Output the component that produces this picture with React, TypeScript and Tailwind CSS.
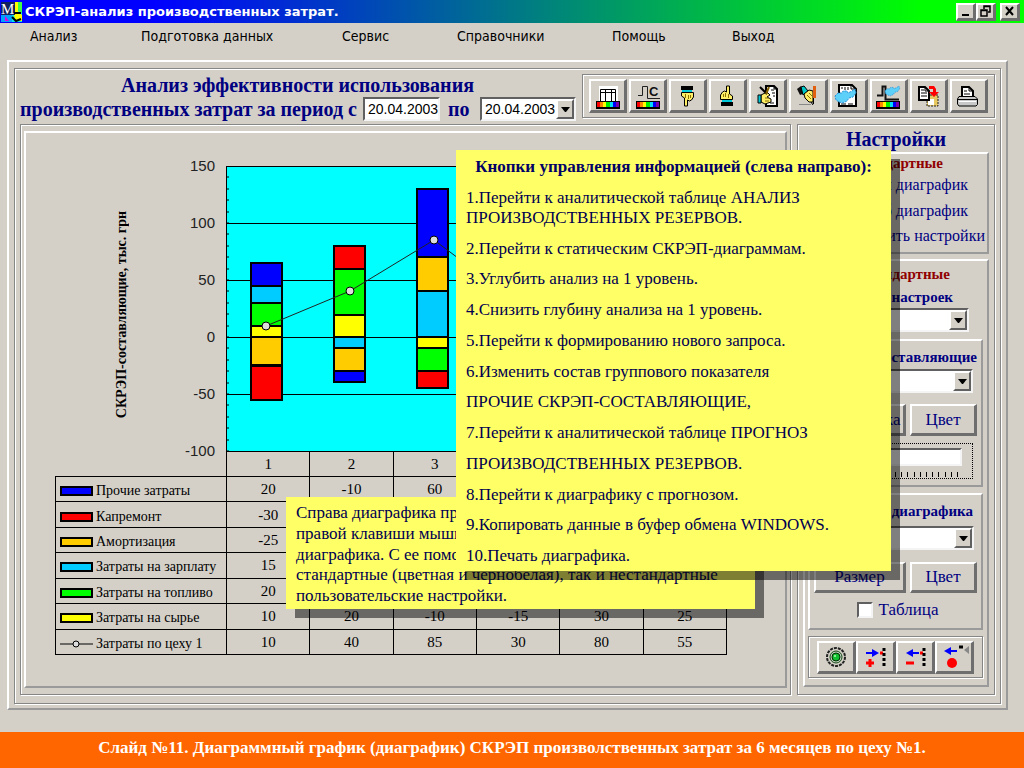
import React, { useState } from 'react';

const SERIES = [
   { name: 'Прочие затраты', color: '#0000ff', values: [20, -10, 60] },
   { name: 'Капремонт', color: '#ff0000', values: [-30, 20, -15] },
   { name: 'Амортизация', color: '#ffcc00', values: [-25, -20, 30] },
   { name: 'Затраты на зарплату', color: '#00ccff', values: [15, -10, 40] },
   { name: 'Затраты на топливо', color: '#00ff00', values: [20, 40, -20] },
   { name: 'Затраты на сырье', color: '#ffff00', values: [10, 20, -10, -15, 30, 25] },
];
const TOTALS = [10, 40, 85, 30, 80, 55];
const AXIS = [150, 100, 50, 0, -50, -100];

const MENU = [
   { label: 'Анализ', width: 'w-[111px]' },
   { label: 'Подготовка данных', width: 'w-[201px]' },
   { label: 'Сервис', width: 'w-[115px]' },
   { label: 'Справочники', width: 'w-[155px]' },
   { label: 'Помощь', width: 'w-[120px]' },
   { label: 'Выход', width: 'w-[60px]' },
];

const HINTS = [
   '2.Перейти к статическим СКРЭП-диаграммам.',
   '3.Углубить анализ на 1 уровень.',
   '4.Снизить глубину анализа на 1 уровень.',
   '5.Перейти к формированию нового запроса.',
   '6.Изменить состав группового показателя',
   'ПРОЧИЕ СКРЭП-СОСТАВЛЯЮЩИЕ,',
   '7.Перейти к аналитической таблице ПРОГНОЗ',
   'ПРОИЗВОДСТВЕННЫХ РЕЗЕРВОВ.',
   '8.Перейти к диаграфику с прогнозом.',
   '9.Копировать данные в буфер обмена WINDOWS.',
   '10.Печать диаграфика.',
];

const ETCHED = 'border border-[#868686] shadow-[1px_1px_0_#ffffff,inset_1px_1px_0_#ffffff]';
const RAISED = 'border-2 border-t-white border-l-white border-r-[#9a9a9a] border-b-[#9a9a9a]';
const BUTTON = 'border-t-2 border-l-2 border-r-3 border-b-3 border-t-white border-l-white border-r-[#6e6e6e] border-b-[#6e6e6e] bg-[#d4d0c8]';
const SUNKEN = 'border-2 border-t-[#606060] border-l-[#606060] border-r-[#f4f4f4] border-b-[#f4f4f4] bg-white';

/* ---------- icons ---------- */

const Rainbow = () => (
   <g>
      <rect x="8" y="23" width="24" height="8" fill="#000" />
      <rect x="9" y="24" width="3" height="5" fill="#f00" />
      <rect x="12" y="24" width="3" height="5" fill="#f80" />
      <rect x="15" y="24" width="3" height="5" fill="#ff0" />
      <rect x="18" y="24" width="4" height="5" fill="#0e0" />
      <rect x="22" y="24" width="3" height="5" fill="#0df" />
      <rect x="25" y="24" width="3" height="5" fill="#00f" />
      <rect x="28" y="24" width="3" height="5" fill="#70a" />
   </g>
);

const PointingHand = () => (
   <g>
      <rect x="13" y="8" width="12" height="4" fill="#000" />
      <rect x="14" y="12" width="10" height="2" fill="#00c8d8" />
      <path d="M13.5 14.5H25.5V19L23.5 22L21.5 23L19.5 22V28H16.5V20L13.5 18Z" fill="#ffee66" stroke="#000" />
      <path d="M17.5 16V20M20.5 17V21M22.5 17V20" stroke="#8a7000" fill="none" />
   </g>
);

const MapBlob = () => (
   <path d="M0 7L3 4L7 4L8 2L12 2L13 4L17 2L20 0L21 4L18 8L14 9L12 12L8 14L4 13L1 11Z" fill="#5cd0f8" stroke="#2890d8" strokeDasharray="2 1" />
);

const Icon = ({ children }: { children: React.ReactNode }) => (
   <svg className="h-[34px] w-[38px] shrink-0" viewBox="1 1 38 34" fill="none" aria-hidden="true">{children}</svg>
);

const TOOLS = [
   {
      label: 'Анализ производственных резервов',
      icon: (
         <g>
            <rect x="11" y="8" width="19" height="15" fill="#fff" />
            <path d="M12.5 23V11.5H27.5V23M12 14.5H28M17.5 11V23M23.5 11V23" stroke="#000" />
            <Rainbow />
         </g>
      ),
   },
   {
      label: 'Статические СКРЭП-диаграммы',
      icon: (
         <g>
            <path d="M10 17.5H14.5V8.5H19.5V20.5H32" stroke="#222" />
            <text x="21" y="18" fontFamily="Liberation Sans" fontSize="13" fontWeight="bold" fill="#111">C</text>
            <Rainbow />
         </g>
      ),
   },
   { label: 'Углубить анализ', icon: <PointingHand /> },
   { label: 'Снизить глубину анализа', icon: <g transform="rotate(180 19 18)"><PointingHand /></g> },
   {
      label: 'Новый запрос',
      icon: (
         <g>
            <path d="M18 8H26L29 11V28H18Z" fill="#fff" stroke="#000" strokeWidth="2" />
            <path d="M23 12H26M24 15H27M22 25H26M25 18H27M26 8V11H29" stroke="#000" />
            <path d="M13 17L19 14L22 17L19 19L23 21L23 24L17 26L13 24Z" fill="#ffee66" stroke="#000" />
            <path d="M17 20H21M17 23H21" stroke="#8a7000" />
            <path d="M12 9L19 16" stroke="#000" strokeWidth="2" />
            <path d="M21 9L18 16" stroke="#806000" strokeWidth="2" />
            <path d="M10 17H13V25H10Z" fill="#00c8d8" stroke="#000" />
         </g>
      ),
   },
   {
      label: 'Прочие СКРЭП-составляющие',
      icon: (
         <g>
            <path d="M9 11L13 8L17 15L12 17Z" fill="#111" />
            <path d="M13 9L16 8L20 13L15 17Z" fill="#00c8c8" stroke="#000" />
            <path d="M16 16L21 12L25 13V19L25 24L21 24L17 20Z" fill="#ffee66" stroke="#000" />
            <path d="M19 17L23 21M21 15L24 18" stroke="#8a7000" />
            <path d="M26.5 8V20" stroke="#e06010" strokeWidth="3" />
            <path d="M25.5 20V26M23 24L25 27" stroke="#000" />
            <path d="M11 26.5H23" stroke="#888" />
         </g>
      ),
   },
   {
      label: 'Прогноз производственных резервов',
      icon: (
         <g>
            <path d="M11 7H24L28 11V28H11Z" fill="#fff" stroke="#000" strokeWidth="2" />
            <path d="M23 6V11H28M13 10H15M17 9V12M20 9V12M13 26H18M20 26H25" stroke="#000" />
            <g transform="translate(7 11)"><MapBlob /></g>
         </g>
      ),
   },
   {
      label: 'Диаграфик с прогнозом',
      icon: (
         <g>
            <path d="M9 17.5H14.5V8.5H17.5V21.5H31" stroke="#111" strokeWidth="2" />
            <g transform="translate(17 8) scale(.7)"><MapBlob /></g>
            <Rainbow />
         </g>
      ),
   },
   {
      label: 'Копировать в буфер обмена',
      icon: (
         <g>
            <path d="M19 17H30V28H19Z" fill="#e8c860" stroke="#222" strokeDasharray="2 1" />
            <path d="M20 21H26V27H20Z" fill="#fff" />
            <path d="M11 9H17L21 13V22H11Z" fill="#fff" stroke="#000" strokeWidth="2" />
            <path d="M13 12H16M13 15H19M13 18H19M17 9V13H21" stroke="#000" />
            <path d="M21 8H26L28 11V14H31L26 19L21 14H25V11H21Z" fill="#f00" />
         </g>
      ),
   },
   {
      label: 'Печать диаграфика',
      icon: (
         <g>
            <path d="M14 18V9H21L25 13V18" fill="#fff" stroke="#000" strokeWidth="2" />
            <path d="M16 13H19M16 16H22M21 9V13H25" stroke="#000" />
            <path d="M11 18.5H27L29.5 21V26.5L28 28H11L9.5 26V21Z" fill="#c8c8c8" stroke="#000" />
            <path d="M10 21.5H29" stroke="#000" />
            <path d="M11 23.5H28" stroke="#fff" />
         </g>
      ),
   },
];

const LEGEND_TOOLS = [
   {
      label: 'Обновить',
      icon: (
         <g>
            <circle cx="20" cy="18" r="9" stroke="#222" strokeWidth="2" strokeDasharray="3 1" />
            <circle cx="20" cy="18" r="6" fill="#b8c8b8" stroke="#1a4a1a" />
            <circle cx="20" cy="18" r="4" fill="#10c030" stroke="#003000" />
            <circle cx="19" cy="17" r="1" fill="#b0ffb0" />
         </g>
      ),
   },
   {
      label: 'Добавить',
      icon: (
         <g>
            <path d="M11 13H17V10L24 14L17 18V15H11Z" fill="#00f" />
            <path d="M11 24H19M15 20V28" stroke="#f00" strokeWidth="3" />
            <path d="M25 14H28" stroke="#f00" strokeWidth="3" />
            <path d="M29 9V28" stroke="#000" strokeWidth="3" strokeDasharray="3 2" />
         </g>
      ),
   },
   {
      label: 'Удалить',
      icon: (
         <g>
            <path d="M24 13H18V10L11 14L18 18V15H24Z" fill="#00f" />
            <path d="M11 24H19" stroke="#f00" strokeWidth="3" />
            <path d="M25 14H28" stroke="#f00" strokeWidth="3" />
            <path d="M29 9V28" stroke="#000" strokeWidth="3" strokeDasharray="3 2" />
         </g>
      ),
   },
   {
      label: 'Записать',
      icon: (
         <g>
            <path d="M23 11H17V8L10 12L17 16V13H23Z" fill="#00f" />
            <circle cx="18" cy="24" r="5" fill="#f00" />
            <path d="M25 8H29" stroke="#000" strokeWidth="3" />
            <path d="M35 7V15L30 11Z" fill="#888" />
         </g>
      ),
   },
];

const AppIcon = () => (
   <svg className="h-[22px] w-[22px] shrink-0" viewBox="0 0 22 22" aria-hidden="true">
      <rect x="1" y="1" width="21" height="20" fill="#00e8e8" />
      <path d="M1 14L12 12V21H1Z" fill="#00a0ff" />
      <path d="M14 1H18V10L22 14V20H16L13 12Z" fill="#ffff00" />
      <path d="M18 1H22V12L18 9Z" fill="#40ff40" />
      <path d="M5 15L9 20H5Z" fill="#e000e0" />
      <rect x="1" y="1" width="14" height="13" fill="#102060" />
      <text x="1" y="13" fontFamily="Liberation Serif" fontSize="15" fill="#fff">M</text>
      <path d="M14 12H21M12 16L16 20L21 18" stroke="#000" strokeWidth="2" fill="none" />
   </svg>
);

/* ---------- controls ---------- */

const Combo = ({ label, options, className = '' }: { label: string; options: string[]; className?: string }) => (
   <div className={`relative h-6 ${SUNKEN} ${className}`}>
      <select aria-label={label} className="block h-full w-full appearance-none pl-[3px] font-['Liberation_Sans',sans-serif] text-[14px] leading-5 text-black outline-none">
         {options.map((option) => <option key={option}>{option}</option>)}
      </select>
      <span className="pointer-events-none absolute inset-y-0 right-0 flex w-[18px] items-center justify-center border-2 border-t-white border-l-white border-r-[#606060] border-b-[#606060] bg-[#d4d0c8]">
         <svg className="h-[5px] w-[9px]" viewBox="0 0 9 5" aria-hidden="true"><path d="M0 0H9L5 5H4Z" fill="#000" /></svg>
      </span>
   </div>
);

const TextButton = ({ children, className = '' }: { children: React.ReactNode; className?: string }) => (
   <button type="button" className={`${BUTTON} text-center text-[17px] leading-5 text-[#000080] ${className}`}>{children}</button>
);

const Stack = ({ index, y }: { index: number; y: (v: number) => number }) => {
   const x = 25 + index * 83;
   let up = 0;
   let down = 0;
   // series are stacked from the last one in the legend to the first
   return (
      <g>
         {[...SERIES].reverse().map((s) => {
            const v = s.values[index] ?? 0;
            const from = v > 0 ? up : down;
            if (v > 0) up += v;
            else down += v;
            return <rect key={s.name} x={x} width="31" y={y(Math.max(from, from + v))} height={y(0) - y(Math.abs(v))} fill={s.color} stroke="#000" strokeWidth="2" />;
         })}
      </g>
   );
};

const Plot = () => {
   const y = (v: number) => Math.round(((150 - v) * 285) / 250);
   const points = TOTALS.map((v, i) => [40 + i * 84, y(v)]);
   return (
      <svg className="block h-[285px] min-w-0 flex-1" viewBox="0 0 501 285" preserveAspectRatio="none" role="img" aria-label="Диаграфик">
         <rect x="0" y="0" width="501" height="285" fill="#00ffff" />
         {AXIS.map((v) => <path key={v} d={`M0 ${y(v) + 0.5}H501`} stroke="#000" />)}
         {Array.from({ length: 25 }, (_, i) => <path key={i} d={`M0 ${y(i * 10 - 100)}h3`} stroke="#000" />)}
         <path d="M0.5 0V285" stroke="#000" />
         {TOTALS.map((_, i) => <Stack key={i} index={i} y={y} />)}
         <path d={`M0 ${y(0) + 0.5}H501`} stroke="#000" />
         <polyline points={points.map((p) => p.join(',')).join(' ')} fill="none" stroke="#222" />
         {points.map(([px, py]) => <circle key={px} cx={px} cy={py} r="4" fill="#ddd" stroke="#000" />)}
      </svg>
   );
};

const CELL = 'h-[25px] border border-black p-0 text-center font-normal';

const DataTable = () => (
   <table className="h-[204px] w-full table-fixed border-collapse text-[15px] leading-4 text-black">
      <thead>
         <tr>
            <td className="h-[25px] w-[171px] p-0"></td>
            {TOTALS.map((_, i) => <th key={i} scope="col" className={CELL}>{i + 1}</th>)}
         </tr>
      </thead>
      <tbody>
         {SERIES.map((s) => (
            <tr key={s.name}>
               <th scope="row" className="h-[25px] border border-black p-0 pl-1 text-left font-normal">
                  <span className="flex items-center gap-[3px] pt-1 text-[14px] whitespace-nowrap">
                     <span className="h-[10px] w-[33px] border-2 border-black" style={{ background: s.color }}></span>
                     {s.name}
                  </span>
               </th>
               {TOTALS.map((_, i) => <td key={i} className={CELL}>{s.values[i]}</td>)}
            </tr>
         ))}
         <tr>
            <th scope="row" className="h-[25px] border border-black p-0 pl-1 text-left font-normal">
               <span className="flex items-center gap-[3px] pt-1 text-[14px] whitespace-nowrap">
                  <svg className="h-2 w-[33px]" viewBox="0 0 33 8" aria-hidden="true">
                     <path d="M0 4H33" stroke="#000" />
                     <circle cx="16" cy="4" r="3" fill="#ddd" stroke="#000" />
                  </svg>
                  Затраты по цеху 1
               </span>
            </th>
            {TOTALS.map((v, i) => <td key={i} className={CELL}>{v}</td>)}
         </tr>
      </tbody>
   </table>
);

const Settings = () => {
   const [mode, setMode] = useState('color');
   const [showTable, setShowTable] = useState(false);

   return (
      <aside className={`flex w-[198px] shrink-0 flex-col px-[5px] pb-[7px] text-[#000080] ${ETCHED}`}>
         <h2 className="h-[27px] pt-1 text-center text-[20px] leading-5 font-bold">Настройки</h2>

         <fieldset className={`h-[102px] text-right text-[16px] leading-5 ${RAISED}`}>
            <legend className="sr-only">Вид</legend>
            <p className="pr-11 text-[15px] leading-[18px] font-bold text-[#900000]">Стандартные</p>
            <label className="flex h-[26px] items-center justify-end gap-1 pr-[19px]">
               <input type="radio" name="mode" checked={mode === 'color'} onChange={() => setMode('color')} />
               Цветной диаграфик
            </label>
            <label className="flex h-[25px] items-center justify-end gap-1 pr-[19px]">
               <input type="radio" name="mode" checked={mode === 'mono'} onChange={() => setMode('mono')} />
               Ч/б диаграфик
            </label>
            <button type="button" className="block w-full pt-[3px] pr-[2px] text-right">Сохранить настройки</button>
         </fieldset>

         <div className={`mt-[5px] flex flex-1 flex-col pr-1 pl-[3px] text-right ${RAISED}`}>
            <p className="pt-[3px] pr-[33px] text-[15px] leading-5 font-bold text-[#900000]">Нестандартные</p>
            <p className="pt-[3px] pr-[30px] text-[15px] leading-5 font-bold">Список настроек</p>
            <Combo label="Список настроек" options={['']} className="mt-px mr-[14px]" />

            <section className={`mt-[7px] h-[148px] px-1 ${RAISED}`}>
               <p className="pt-[6px] text-[15px] leading-5 font-bold whitespace-nowrap">Составляющие</p>
               <Combo label="Составляющие" options={['']} className="mt-[2px] mr-1" />
               <div className="mt-[11px] flex gap-1">
                  <TextButton className="h-8 w-[92px]">Штриховка</TextButton>
                  <TextButton className="h-8 min-w-0 flex-1">Цвет</TextButton>
               </div>
               <div className="mt-[7px] mr-1 h-9 border border-dotted border-black pt-1 pr-[10px] pl-2">
                  <input
                     type="range"
                     aria-label="Ширина"
                     defaultValue="0"
                     className={`block h-[18px] w-full appearance-none ${SUNKEN} [&::-webkit-slider-thumb]:h-3 [&::-webkit-slider-thumb]:w-2 [&::-webkit-slider-thumb]:appearance-none [&::-webkit-slider-thumb]:bg-[#d4d0c8]`}
                  />
                  <div className="mx-1 mt-[6px] flex justify-between">
                     {Array.from({ length: 22 }, (_, i) => <span key={i} className="h-[5px] w-px bg-black"></span>)}
                  </div>
               </div>
            </section>

            <section className={`mt-[6px] h-[137px] px-1 ${RAISED}`}>
               <p className="pt-[6px] pr-1 text-[15px] leading-5 font-bold whitespace-nowrap">Фон диаграфика</p>
               <Combo label="Фон диаграфика" options={['']} className="mt-[5px] mr-[3px]" />
               <div className="mt-3 flex gap-1">
                  <TextButton className="h-[31px] w-[92px]">Размер</TextButton>
                  <TextButton className="h-[31px] min-w-0 flex-1">Цвет</TextButton>
               </div>
               <label className="mt-[7px] flex items-center justify-center gap-[6px] pr-2 pl-3 text-[17px] leading-5">
                  <input
                     type="checkbox"
                     checked={showTable}
                     onChange={(e) => setShowTable(e.target.checked)}
                     className={`h-4 w-4 appearance-none checked:bg-[#000080] ${SUNKEN}`}
                  />
                  Таблица
               </label>
            </section>

            <div className={`mt-[6px] flex h-[42px] px-2 py-1 ${ETCHED}`}>
               {LEGEND_TOOLS.map((t) => (
                  <button key={t.label} type="button" aria-label={t.label} className={`flex h-[33px] min-w-0 flex-1 items-center justify-center overflow-hidden ${BUTTON}`}>
                     <Icon>{t.icon}</Icon>
                  </button>
               ))}
            </div>
         </div>
      </aside>
   );
};

const TitleBar = () => (
   <header className="flex h-[23px] items-center bg-linear-to-r/srgb from-[#0000ff] from-15% to-[#00ff00] to-90% pr-1">
      <AppIcon />
      <h1 className="flex-1 pl-[3px] font-['DejaVu_Sans',sans-serif] text-[13px] font-bold text-white">СКРЭП-анализ производственных затрат.</h1>
      <button type="button" aria-label="Свернуть" className={`h-[18px] w-5 ${BUTTON}`}>
         <svg className="h-3 w-4" viewBox="0 0 16 12"><path d="M4 10H11" stroke="#000" strokeWidth="2" /></svg>
      </button>
      <button type="button" aria-label="Восстановить" className={`mr-1 h-[18px] w-5 ${BUTTON}`}>
         <svg className="h-3 w-4" viewBox="0 0 16 12" fill="none" stroke="#000"><path d="M6 4V1H12V7H10M6 1.5H12M3 5H9V11H3ZM3 5.5H9" strokeWidth="1.5" /></svg>
      </button>
      <button type="button" aria-label="Закрыть" className={`h-[18px] w-5 ${BUTTON}`}>
         <svg className="h-3 w-4" viewBox="0 0 16 12"><path d="M4 2L11 10M11 2L4 10" stroke="#000" strokeWidth="2" /></svg>
      </button>
   </header>
);

const App = () => {
   const [from, setFrom] = useState('20.04.2003');

   return (
      <div className="relative flex min-h-screen flex-col bg-[#d4d0c8] font-['Liberation_Serif',serif]">
         <TitleBar />

         <nav className="flex h-[37px] pt-1 pl-[30px] font-['DejaVu_Sans_Condensed','DejaVu_Sans',sans-serif] text-[14px] leading-[18px] text-black">
            {MENU.map((m) => (
               <div key={m.label} className={m.width}>
                  <button type="button" className="whitespace-nowrap">{m.label}</button>
               </div>
            ))}
         </nav>

         <main className={`mr-4 mb-[22px] ml-[7px] flex flex-1 flex-col px-[5px] pt-[6px] pb-1 ${RAISED}`}>
            <div className={`flex flex-1 flex-col px-[5px] pt-[5px] pb-2 ${ETCHED}`}>
               <div className="flex justify-between">
                  <div className="w-[560px] text-[20px] leading-[22px] font-bold text-[#000080]">
                     <p className="pl-[101px] whitespace-nowrap">Анализ эффективности использования</p>
                     <div className="mt-px flex items-center whitespace-nowrap">
                        <label htmlFor="from" className="w-[343px]">производственных затрат за период с</label>
                        <input
                           id="from"
                           value={from}
                           onChange={(e) => setFrom(e.target.value)}
                           className={`h-6 w-[77px] pl-[3px] font-['Liberation_Sans',sans-serif] text-[14px] font-normal text-black ${SUNKEN}`}
                        />
                        <span className="w-10 pl-2">по</span>
                        <Combo label="по" options={['20.04.2003']} className="w-24 font-normal" />
                     </div>
                  </div>
                  <div className={`flex h-11 w-[413px] gap-[2px] px-[6px] py-1 ${ETCHED}`}>
                     {TOOLS.map((t) => (
                        <button key={t.label} type="button" aria-label={t.label} className={`flex min-w-0 flex-1 items-center justify-center overflow-hidden ${BUTTON}`}>
                           <Icon>{t.icon}</Icon>
                        </button>
                     ))}
                  </div>
               </div>

               <div className="mt-[3px] flex flex-1 gap-[6px]">
                  <section className={`flex min-w-0 flex-1 px-[3px] pt-[6px] pb-[6px] ${ETCHED}`}>
                     <div className={`min-w-0 flex-1 pt-[33px] pr-[58px] pl-[29px] ${RAISED}`}>
                        <div className="flex">
                           <div className="flex w-[171px] shrink-0 items-center justify-between pr-[11px] pl-[59px]">
                              <p className="rotate-180 pb-3 text-[14px] leading-4 font-bold text-black [writing-mode:vertical-rl]">СКРЭП-составляющие, тыс. грн</p>
                              <ul className="-my-2 flex h-[301px] flex-col justify-between text-right font-['Liberation_Sans',sans-serif] text-[15px] leading-4 text-[#222]">
                                 {AXIS.map((v) => <li key={v}>{v}</li>)}
                              </ul>
                           </div>
                           <Plot />
                        </div>
                        <DataTable />
                     </div>
                  </section>
                  <Settings />
               </div>
            </div>
         </main>

         <footer className="flex h-9 items-center justify-center bg-[#ff6600] pb-1 text-[17px] font-bold text-white">
            Слайд №11. Диаграммный график (диаграфик) СКРЭП произволственных затрат за 6 месяцев по цеху №1.
         </footer>

         {/* callouts over the form */}
         <div className="absolute top-[497px] left-[286px] flex h-[112px] w-[469px] flex-col justify-between bg-[#ffff66] px-[10px] pt-[6px] pb-[3px] text-[17px] leading-5 whitespace-nowrap text-[#000050] shadow-[9px_9px_0_rgba(0,0,0,0.5)]">
            <p>Справа диаграфика при</p>
            <p>правой клавиши мыши</p>
            <p>диаграфика. С ее помощью</p>
            <p>стандартные (цветная и чернобелая), так и нестандартные</p>
            <p>пользовательские настройки.</p>
         </div>
         <div className="absolute top-[150px] left-[456px] flex h-[421px] w-[435px] flex-col justify-between bg-[#ffff66] px-[10px] pt-[7px] pb-[5px] text-[17px] leading-5 text-[#000050] shadow-[9px_9px_0_rgba(0,0,0,0.5)]">
            <h2 className="text-center font-bold text-[#000066]">Кнопки управления информацией (слева направо):</h2>
            <p>1.Перейти к аналитической таблице АНАЛИЗ<br />ПРОИЗВОДСТВЕННЫХ РЕЗЕРВОВ.</p>
            {HINTS.map((hint) => <p key={hint}>{hint}</p>)}
         </div>
      </div>
   );
};

export default App;
